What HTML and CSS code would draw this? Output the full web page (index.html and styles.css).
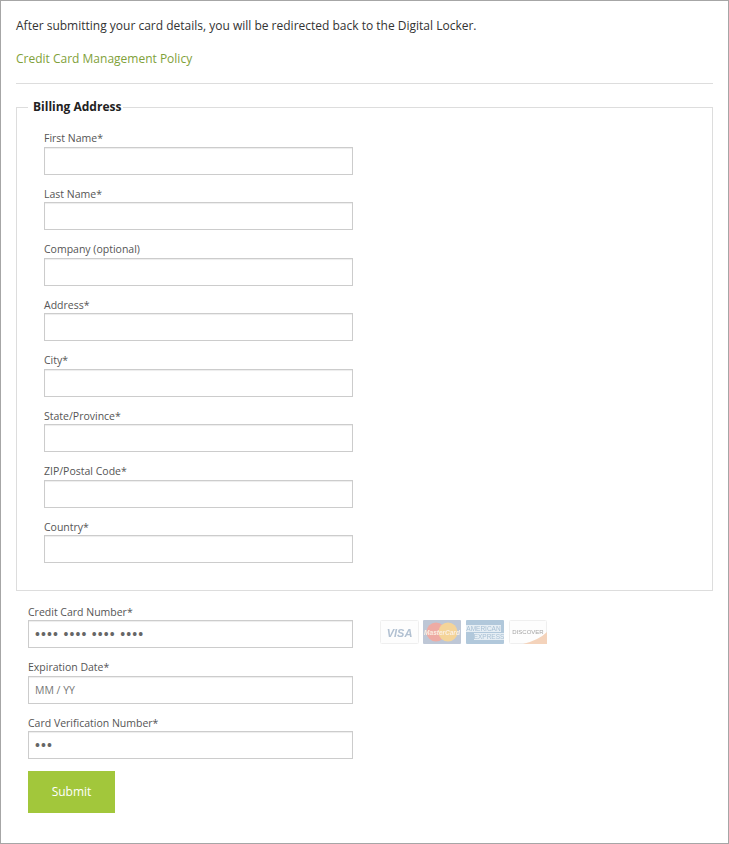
FILE: index.html
```html
<!DOCTYPE html>
<html lang="en">
<head>
  <meta charset="UTF-8" />
  <title>Billing</title>
  <link rel="stylesheet" href="styles.css">
</head>
<body>
  <div class="page">
    <p class="intro">After submitting your card details, you will be redirected back to the Digital Locker.</p>
    <p class="policy"><a href="#">Credit Card Management Policy</a></p>
    <hr />
    <form>
      <fieldset class="billing">
        <legend>Billing Address</legend>
        <div class="field"><label for="first">First Name*</label><input id="first" type="text" /></div>
        <div class="field"><label for="last">Last Name*</label><input id="last" type="text" /></div>
        <div class="field"><label for="company">Company (optional)</label><input id="company" type="text" /></div>
        <div class="field"><label for="address">Address*</label><input id="address" type="text" /></div>
        <div class="field"><label for="city">City*</label><input id="city" type="text" /></div>
        <div class="field"><label for="state">State/Province*</label><input id="state" type="text" /></div>
        <div class="field"><label for="zip">ZIP/Postal Code*</label><input id="zip" type="text" /></div>
        <div class="field"><label for="country">Country*</label><input id="country" type="text" /></div>
      </fieldset>

      <div class="payment">
        <div class="field">
          <label for="card">Credit Card Number*</label>
          <div class="card-row">
            <input id="card" type="text" class="dots" value="•••• •••• •••• ••••" />
            <div class="card-logos">
              <svg width="39" height="24" viewBox="0 0 39 24">
                <rect x="0.5" y="0.5" width="38" height="23" rx="1" fill="#fdfdfd" stroke="#eeeeee"/>
                <text x="19.5" y="17" text-anchor="middle" class="logo-visa">VISA</text>
              </svg>
              <svg width="38" height="24" viewBox="0 0 38 24">
                <rect width="38" height="24" rx="1" fill="#b7c2d2"/>
                <circle cx="13" cy="12" r="9.5" fill="#eda39b"/>
                <circle cx="25" cy="12" r="9.5" fill="#f3d08f"/>
                <text x="19" y="14.5" text-anchor="middle" class="logo-mc">MasterCard</text>
              </svg>
              <svg width="38" height="24" viewBox="0 0 38 24">
                <rect width="38" height="24" rx="1" fill="#a9c3d8"/>
                <rect y="5" width="35" height="7" fill="#e4edf3"/>
                <rect x="8" y="13" width="30" height="7" fill="#e4edf3"/>
                <text x="17.5" y="11" text-anchor="middle" class="logo-amex">AMERICAN</text>
                <text x="23" y="19" text-anchor="middle" class="logo-amex">EXPRESS</text>
              </svg>
              <svg width="38" height="24" viewBox="0 0 38 24">
                <rect x="0.5" y="0.5" width="37" height="23" rx="1" fill="#fdfdfd" stroke="#eeeeee"/>
                <path d="M14 24 Q30 20 38 12 V24 Z" fill="#f3cfb4"/>
                <text x="19" y="13.5" text-anchor="middle" class="logo-disc">DISCOVER</text>
              </svg>
            </div>
          </div>
        </div>
        <div class="field"><label for="expiry">Expiration Date*</label><input id="expiry" type="text" placeholder="MM / YY" /></div>
        <div class="field"><label for="cvv">Card Verification Number*</label><input id="cvv" type="text" class="dots" value="•••" /></div>
        <button type="button" class="submit-btn">Submit</button>
      </div>
    </form>
  </div>
</body>
</html>
```

FILE: styles.css
```css
* {
  box-sizing: border-box;
}

body {
  margin: 0;
  font-family: "Open Sans", sans-serif;
  font-size: 12px;
  color: #333;
  background: white;
}

.page {
  width: 729px;
  height: 844px;
  padding: 16px 15px 0;
  border: 1px solid #a6a6a6;
}

.intro, .policy {
  margin: 0;
  line-height: 18px;
}

.policy {
  margin-top: 15px;
}

.policy a {
  color: #7fa13a;
  text-decoration: none;
}

hr {
  margin: 15px 0 0;
  border: none;
  border-top: 1px solid #dddddd;
}

.billing {
  margin: 14px 0 0;
  padding: 13px 27px 0;
  height: 493px;
  border: 1px solid #dddddd;
}

.billing legend {
  margin-left: -16px;
  padding: 0 2px 0 5px;
  font-weight: 700;
  line-height: 18px;
  color: #222;
}

.field {
  margin-bottom: 10px;
}

.field label {
  display: block;
  padding-top: 1px;
  font-size: 10.5px;
  line-height: 16.5px;
  color: #555;
}

.field input {
  display: block;
  flex: none;
  width: 309px;
  height: 28px;
  padding: 0 6px;
  border: 1px solid #cccccc;
  box-shadow: inset 0 1px 1px rgba(0, 0, 0, 0.075);
  font-family: "Open Sans", sans-serif;
  font-size: 10.5px;
  color: #666;
  outline: none;
}

.field input::placeholder {
  color: #777;
  opacity: 1;
}

.field input.dots {
  font-size: 13px;
  font-weight: 700;
  letter-spacing: 1.1px;
}

.payment {
  padding: 11.5px 12px 0;
}

.payment .field input {
  width: 325px;
}

.card-row {
  display: flex;
  align-items: flex-start;
}

.card-logos {
  display: flex;
  gap: 5px;
  margin-left: 27px;
}

.card-logos svg {
  display: block;
  filter: blur(0.4px);
  opacity: 0.9;
}

.card-logos svg:first-child {
  margin-right: -1px;
}

.card-logos text {
  font-family: "Liberation Sans", sans-serif;
}

.logo-visa {
  font-size: 11px;
  font-weight: 700;
  font-style: italic;
  fill: #a9bacd;
}

.logo-mc {
  font-size: 6.5px;
  font-weight: 700;
  font-style: italic;
  fill: #fbeee0;
}

.logo-amex {
  font-size: 6.5px;
  fill: #9db8cf;
}

.logo-disc {
  font-size: 6px;
  fill: #9a9a9a;
}

.submit-btn {
  display: block;
  width: 87px;
  height: 42px;
  margin-top: 12px;
  padding: 0 0 2px;
  border: none;
  background: #a2c73b;
  color: white;
  font-family: "Open Sans", sans-serif;
  font-size: 12px;
  cursor: pointer;
}
```
